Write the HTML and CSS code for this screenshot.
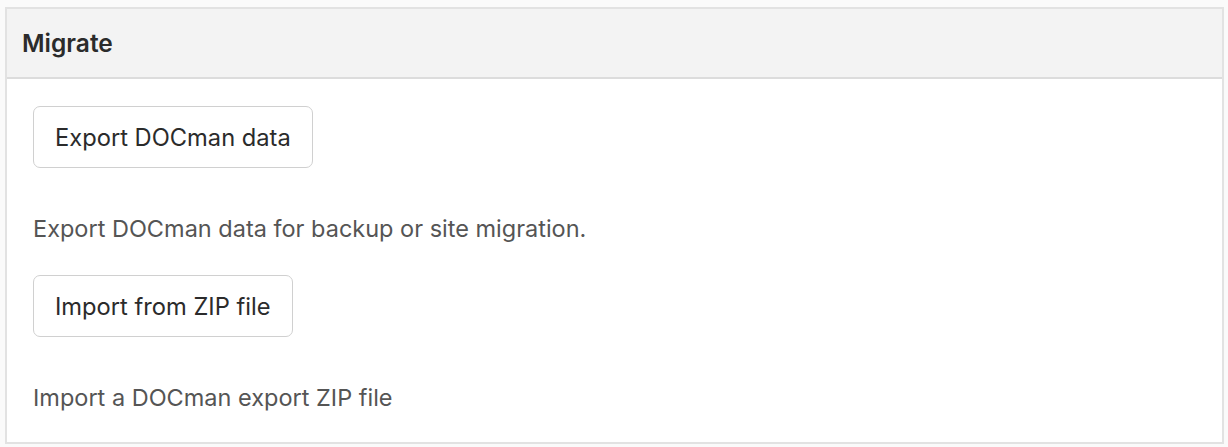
FILE: index.html
```html
<!DOCTYPE html>
<html>
<head>
<meta charset="utf-8">
<link rel="stylesheet" href="styles.css">
</head>
<body>
<div class="card">
  <div class="card-header"><h2 class="card-title">Migrate</h2></div>
  <div class="card-body">
    <button class="btn" type="button">Export DOCman data</button>
    <p class="help">Export DOCman data for backup or site migration.</p>
    <button class="btn" type="button">Import from ZIP file</button>
    <p class="help last">Import a DOCman export ZIP file</p>
  </div>
</div>
</body>
</html>
```
FILE: styles.css
```css
html, body {
  margin: 0;
  padding: 0;
  background: #fafafa;
}
body {
  padding: 7px 4px 4px 5px;
  font-family: Inter, "Noto Sans", "Liberation Sans", sans-serif;
  color: #333;
}
.card {
  border: 2px solid #e2e2e2;
  background: #fff;
  box-sizing: border-box;
  height: 437px;
}
.card-header {
  background: #f3f3f3;
  border-bottom: 2px solid #dcdcdc;
  height: 68px;
  display: flex;
  align-items: center;
  padding: 0 15px;
}
.card-title {
  margin: 0;
  font-size: 24.5px;
  font-weight: 600;
  color: #2b2b2b;
}
.card-body {
  padding: 27px 26px;
}
.btn {
  display: block;
  font-family: inherit;
  font-size: 23.7px;
  color: #2b2b2b;
  background: #fff;
  border: 1.5px solid #d0d0d0;
  border-radius: 7px;
  height: 62px;
  padding: 0 21px;
  margin: 0;
}
.help {
  margin: 44px 0 30px;
  font-size: 23.5px;
  line-height: 33px;
  color: #555;
}
.help.last {
  margin-bottom: 0;
}
```
